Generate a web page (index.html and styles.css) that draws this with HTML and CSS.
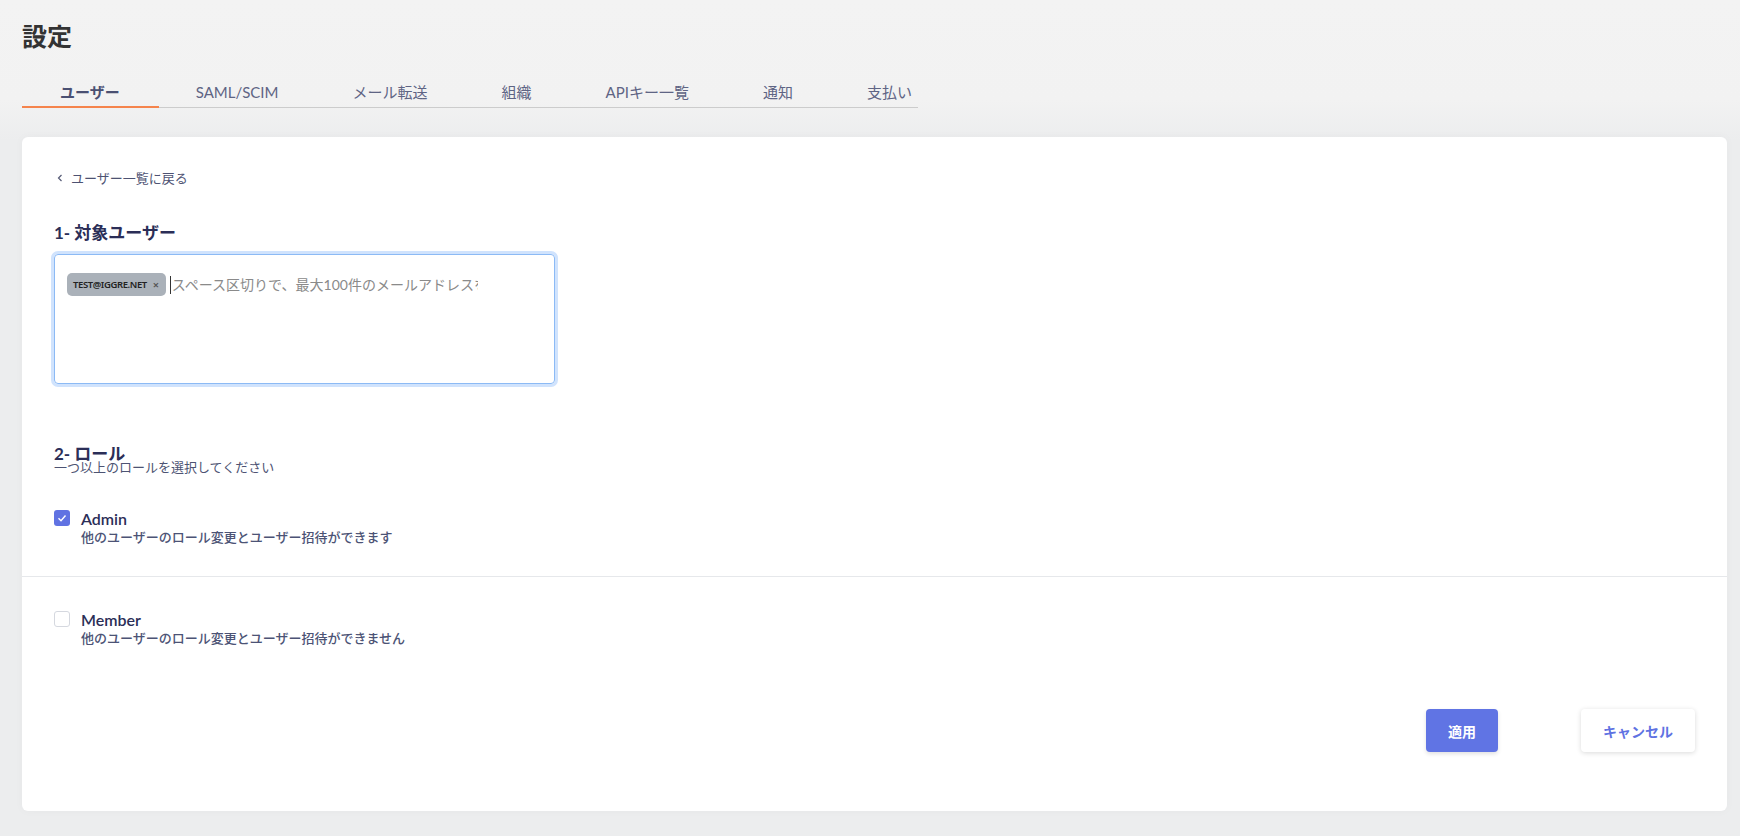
FILE: index.html
```html
<!DOCTYPE html>
<html lang="ja">
<head>
    <meta charset="UTF-8">
    <meta name="viewport" content="width=device-width, initial-scale=1.0">
    <title>設定</title>
    <link rel="stylesheet" href="styles.css">
</head>
<body>

    <header class="page-header">
        <h1>設定</h1>
        <nav class="tabs">
            <a class="tab active">ユーザー</a>
            <a class="tab">SAML/SCIM</a>
            <a class="tab">メール転送</a>
            <a class="tab">組織</a>
            <a class="tab">APIキー一覧</a>
            <a class="tab">通知</a>
            <a class="tab">支払い</a>
        </nav>
    </header>

    <main class="card">
        <!-- 戻るリンク -->
        <a class="back-link">
            <svg width="6" height="8" viewBox="0 0 6 8"><path d="M4.5 1 L1.5 4 L4.5 7" fill="none" stroke="#555a75" stroke-width="1.2"/></svg>
            <span>ユーザー一覧に戻る</span>
        </a>

        <!-- 対象ユーザー -->
        <h2 class="section-title">1- 対象ユーザー</h2>
        <div class="tag-input">
            <div class="tag-row">
                <span class="chip">TEST@IGGRE.NET <span class="chip-x">×</span></span>
                <span class="caret"></span>
                <input type="text" class="tag-field" placeholder="スペース区切りで、最大100件のメールアドレスを入力してください">
            </div>
        </div>

        <!-- ロール -->
        <h2 class="section-title role-title">2- ロール</h2>
        <p class="hint">一つ以上のロールを選択してください</p>

        <div class="roles">
            <div class="role first">
                <span class="check checked">
                    <svg width="16" height="16" viewBox="0 0 16 16"><polyline points="4.5,8.3 7,10.8 11.5,5.5" fill="none" stroke="#fff" stroke-width="1.4"/></svg>
                </span>
                <div>
                    <div class="role-name">Admin</div>
                    <div class="role-desc">他のユーザーのロール変更とユーザー招待ができます</div>
                </div>
            </div>
            <div class="role second">
                <span class="check"></span>
                <div>
                    <div class="role-name">Member</div>
                    <div class="role-desc">他のユーザーのロール変更とユーザー招待ができません</div>
                </div>
            </div>
        </div>

        <div class="actions">
            <button class="btn primary">適用</button>
            <button class="btn secondary">キャンセル</button>
        </div>
    </main>

</body>
</html>
```

FILE: styles.css
```css
/* ページ全体 */
body {
    margin: 0;
    padding: 0 13px 23px 22px;
    font-family: Lato, "Noto Sans CJK JP", sans-serif;
    background: linear-gradient(#f3f3f3 0, #f2f2f2 100px, #ecedee 140px);
    background-color: #ecedee;
    color: #2b2e57;
    min-height: 836px;
    box-sizing: border-box;
}
.page-header {
    padding-top: 18px;
}
h1 {
    margin: 0;
    font-size: 25px;
    line-height: 36px;
    font-weight: 700;
    color: #333;
}

/* タブ */
.tabs {
    display: flex;
    width: 896px;
    margin-top: 27px;
    border-bottom: 1px solid #cccccc;
}
.tab {
    flex-shrink: 0;
    white-space: nowrap;
    padding: 0 37px 3px;
    font-size: 15px;
    line-height: 22px;
    color: #5e6484;
    border-bottom: 2px solid transparent;
    margin-bottom: -1px;
    cursor: pointer;
}
.tab:first-child {
    padding: 0 39px 3px 38px;
}
.tab.active {
    font-weight: 700;
    color: #4a5072;
    border-bottom-color: #f5844c;
}

/* カード */
.card {
    display: block;
    margin-top: 29px;
    background: #fff;
    border-radius: 6px;
    padding: 31px 32px 59px;
    box-shadow: 0 0 10px rgba(0, 0, 0, 0.03);
}
.back-link {
    display: flex;
    align-items: center;
    gap: 8px;
    padding-left: 3px;
    font-size: 13px;
    line-height: 20px;
    color: #4d5272;
    cursor: pointer;
}
.section-title {
    margin: 33px 0 9px;
    font-size: 17px;
    line-height: 24px;
    font-weight: 700;
    color: #2b2e57;
}

/* メール入力欄 */
.tag-input {
    border: 1px solid #8cbaf5;
    border-radius: 4px;
    box-shadow: 0 0 0 3px #d0e3fd;
    padding: 18px 12px 0;
    width: 475px;
    height: 110px;
}
.tag-row {
    display: flex;
    align-items: center;
}
.chip {
    display: inline-flex;
    align-items: center;
    gap: 6px;
    height: 23px;
    padding: 0 7px 0 6px;
    background: #aab1b9;
    border-radius: 5px;
    font-family: "Noto Sans", sans-serif;
    font-size: 9.5px;
    font-weight: 600;
    letter-spacing: -0.4px;
    color: #222;
}
.chip-x {
    font-size: 11px;
    color: #555;
}
.caret {
    width: 1px;
    height: 18px;
    margin-left: 4px;
    background: #333;
}
.tag-field {
    width: 306px;
    padding: 0 0 0 1px;
    border: none;
    outline: none;
    font-family: inherit;
    font-size: 14px;
    line-height: 20px;
    color: #333;
}
.tag-field::placeholder {
    color: #8a8a8a;
}

/* ロール */
.role-title {
    margin: 62px 0 0;
    line-height: 16px;
}
.hint {
    margin: 0;
    font-size: 13px;
    line-height: 10px;
    color: #4d5373;
}
.roles {
    margin: 38px -32px 0;
}
.role {
    display: flex;
    gap: 11px;
    padding: 0 32px;
}
.role.first {
    padding-bottom: 30px;
    border-bottom: 1px solid #e6e8eb;
}
.role.second {
    padding-top: 34px;
}
.check {
    width: 16px;
    height: 16px;
    box-sizing: border-box;
    border: 1px solid #d5d8df;
    border-radius: 3px;
    background: #fff;
    flex-shrink: 0;
}
.check.checked {
    border: none;
    background: #6072e2;
}
.check svg {
    display: block;
}
.role-name {
    font-size: 16px;
    line-height: 18px;
    font-weight: 600;
    color: #2b2e57;
}
.role-desc {
    font-size: 13px;
    line-height: 18px;
    font-weight: 500;
    color: #4c5375;
}

/* ボタン */
.actions {
    display: flex;
    justify-content: flex-end;
    gap: 83px;
    margin-top: 62px;
}
.btn {
    height: 43px;
    padding: 0 22px;
    border: none;
    border-radius: 4px;
    font-family: inherit;
    font-size: 14px;
    font-weight: 700;
    cursor: pointer;
}
.btn.primary {
    background-color: #6074e4;
    color: #fff;
    box-shadow: 0 2px 4px rgba(0, 0, 0, 0.12);
}
.btn.secondary {
    background-color: #fff;
    color: #5f72e2;
    box-shadow: 0 1px 5px rgba(0, 0, 0, 0.15);
}
```
